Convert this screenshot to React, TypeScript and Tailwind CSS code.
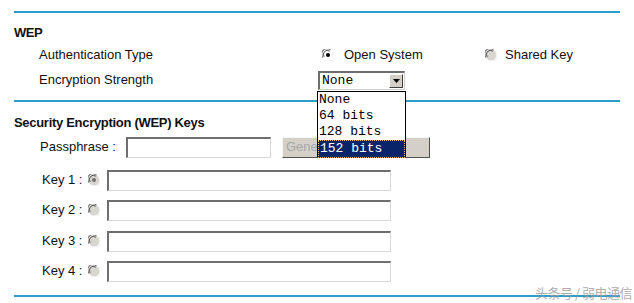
import React from "react";

const Radio = ({ checked = false, disabled = false }: { checked?: boolean; disabled?: boolean }) => (
  <svg width="12" height="12" viewBox="0 0 12 12" className="shrink-0">
    <circle cx="6" cy="6" r="5.5" fill={disabled ? "#d8d6d0" : "#ffffff"} />
    <path d="M1.2 8.5 A5 5 0 0 1 8.5 1.2" fill="none" stroke="#808080" strokeWidth="1.2" />
    <path d="M2.2 7.8 A4 4 0 0 1 7.8 2.2" fill="none" stroke="#404040" strokeWidth="0.9" />
    <path d="M10.8 3.5 A5 5 0 0 1 3.5 10.8" fill="none" stroke="#f0f0f0" strokeWidth="1.2" />
    {checked && <circle cx="6" cy="6" r="2" fill={disabled ? "#707070" : "#000000"} />}
  </svg>
);

const Input = ({ w }: { w: string }) => (
  <div
    className={`${w} h-[21px] bg-white border-t-2 border-l-2 border-b border-r border-t-[#6e6e6e] border-l-[#6e6e6e] border-b-[#d8d8d8] border-r-[#d8d8d8]`}
  />
);

const Line = ({ cls }: { cls: string }) => <div className={`${cls} h-[2px] bg-[#2a9dcc]`} />;

export default function App() {
  return (
    <div
      className="relative w-[634px] h-[303px] bg-white overflow-hidden text-[13px] text-[#111]"
      style={{ fontFamily: '"Liberation Sans", Arial, sans-serif' }}
    >
      <div className="ml-[14px] w-[606px]">
        <Line cls="mt-[11px]" />
        <div className="mt-[9px] h-[22px] flex items-center font-bold tracking-[-0.5px]">WEP</div>
        <div className="h-[22px] flex items-center">
          <div className="pl-[25px] w-[308px]">Authentication Type</div>
          <div className="flex items-center gap-[10px] w-[163px]">
            <Radio checked />
            <span>Open System</span>
          </div>
          <div className="flex items-center gap-[8px]">
            <Radio disabled />
            <span>Shared Key</span>
          </div>
        </div>
        <div className="mt-[3px] h-[22px] flex items-center">
          <div className="pl-[25px] w-[304px]">Encryption Strength</div>
          <div className="relative">
            <div
              className="w-[87px] h-[19px] flex items-center justify-between bg-white border-t-2 border-l-2 border-b border-r border-t-[#6e6e6e] border-l-[#6e6e6e] border-b-[#d0d0d0] border-r-[#d0d0d0] pl-[2px] pr-[1px]"
              style={{ fontFamily: '"Liberation Mono", "Courier New", monospace' }}
            >
              <span className="text-[13px] leading-none text-black">None</span>
              <div className="w-[14px] h-[14px] bg-[#d4d0c8] border border-t-white border-l-white border-b-[#404040] border-r-[#404040] flex items-center justify-center">
                <svg width="7" height="4" viewBox="0 0 7 4">
                  <path d="M0 0 H7 L3.5 4 Z" fill="#000" />
                </svg>
              </div>
            </div>
            <div
              className="absolute left-[-1px] top-[20px] z-10 w-[89px] h-[66px] bg-white border border-black flex flex-col text-[13px] leading-[16px] text-black"
              style={{ fontFamily: '"Liberation Mono", "Courier New", monospace' }}
            >
              <div className="pl-[1px]">None</div>
              <div className="pl-[1px]">64 bits</div>
              <div className="pl-[1px]">128 bits</div>
              <div className="pl-[1px] bg-[#0a246a] text-white border border-dotted border-[#f0c060]">152 bits</div>
            </div>
          </div>
        </div>
        <Line cls="mt-[9px]" />
        <div className="mt-[10px] h-[22px] flex items-center font-bold tracking-[-0.3px]">
          Security Encryption (WEP) Keys
        </div>
        <div className="mt-[2px] h-[22px] flex items-center">
          <div className="pl-[26px] w-[112px]">Passphrase :</div>
          <Input w="w-[145px]" />
          <div className="ml-[11px] w-[148px] h-[21px] bg-[#d4d0c8] border border-t-[#f4f4f4] border-l-[#f4f4f4] border-b-[#505050] border-r-[#505050] flex items-center pl-[3px] text-[#a8a8a8]">
            Generate
          </div>
        </div>
        {[1, 2, 3, 4].map((k, i) => (
          <div key={k} className={`${i === 0 ? "mt-[11px]" : i === 2 ? "mt-[9px]" : "mt-[8px]"} h-[22px] flex items-center`}>
            <div className="pl-[28px] w-[74px]">Key {k} :</div>
            <Radio checked={k === 1} disabled />
            <div className="ml-[7px]">
              <Input w="w-[284px]" />
            </div>
          </div>
        ))}
        <Line cls="mt-[13px]" />
      </div>
      <div
        className="absolute left-[535px] top-[283px] text-[13px] text-[#9a9a9a] tracking-[-0.5px] opacity-80"
        style={{ fontFamily: '"Noto Sans CJK SC", "Liberation Sans", sans-serif' }}
      >
        头条号 / 弱电通信
      </div>
    </div>
  );
}
